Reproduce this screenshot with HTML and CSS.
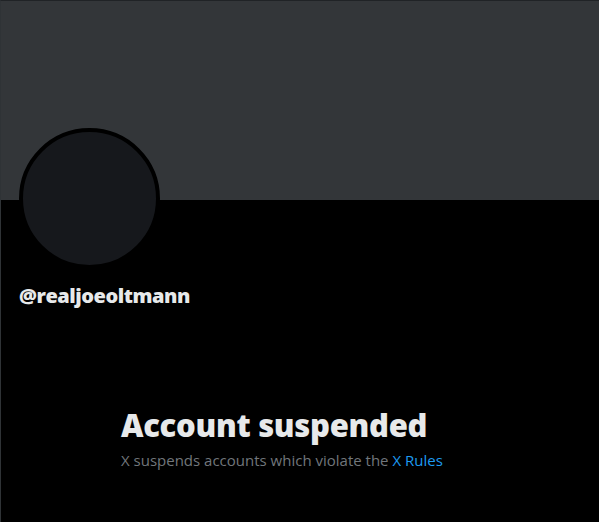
FILE: index.html
```html
<!DOCTYPE html>
<html>
<head>
<meta charset="utf-8">
<link rel="stylesheet" href="styles.css">
</head>
<body>
<div class="page">
  <div class="banner"></div>
  <div class="profile">
    <div class="avatar"></div>
    <div class="handle">@realjoeoltmann</div>
  </div>
  <div class="notice">
    <h1 class="title">Account suspended</h1>
    <p class="desc">X suspends accounts which violate the <a class="link" href="#">X Rules</a></p>
  </div>
</div>
</body>
</html>
```
FILE: styles.css
```css
html, body {
  margin: 0;
  padding: 0;
  background: #000;
}
.page {
  width: 599px;
  height: 522px;
  box-sizing: border-box;
  border-left: 1px solid #2f3336;
  border-top: 1px solid #202326;
  background: #000;
  font-family: "Open Sans", "Liberation Sans", sans-serif;
  overflow: hidden;
}
.banner {
  height: 199px;
  background: #333639;
}
.profile {
  padding: 0 18px;
}
.avatar {
  width: 133px;
  height: 133px;
  margin-top: -72px;
  border-radius: 50%;
  background: #16181c;
  border: 4px solid #000;
}
.handle {
  margin-top: 15px;
  color: #e7e9ea;
  font-weight: 800;
  font-size: 20px;
  line-height: 24px;
  letter-spacing: -0.47px;
}
.notice {
  padding: 99px 0 0 120px;
}
.title {
  margin: 0;
  color: #e7e9ea;
  font-size: 31px;
  font-weight: 800;
  line-height: 36px;
  letter-spacing: -0.3px;
}
.desc {
  margin: 7px 0 0;
  color: #71767b;
  font-size: 15px;
  line-height: 20px;
}
.link {
  color: #1d9bf0;
  text-decoration: none;
}
```
